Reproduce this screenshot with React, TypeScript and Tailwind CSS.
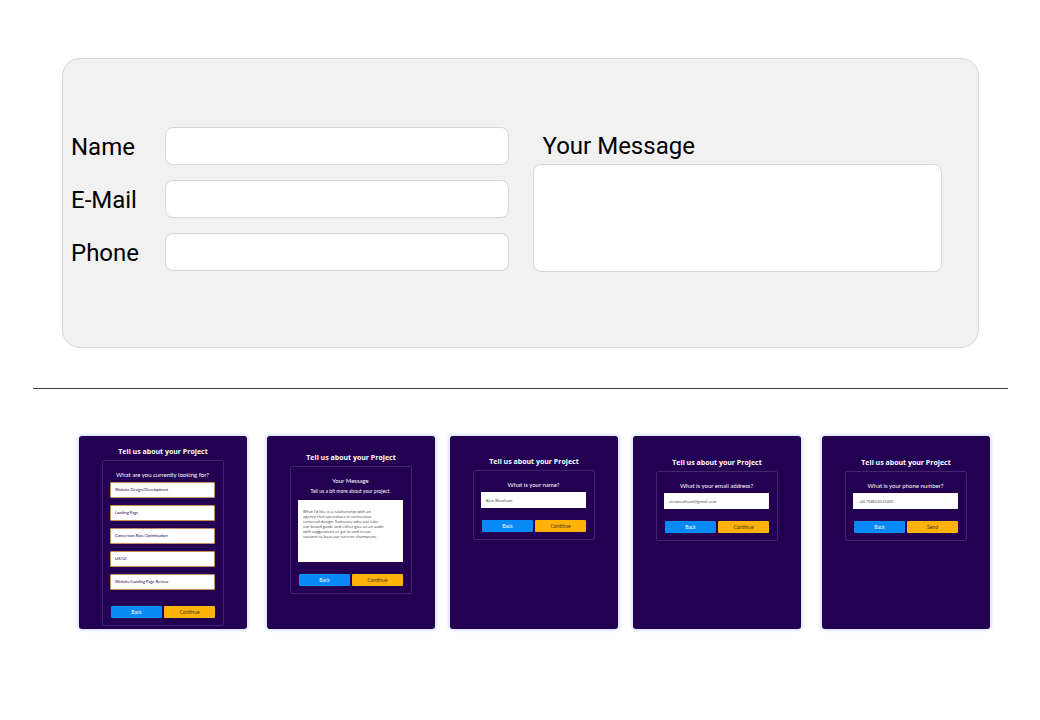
import { ReactNode } from "react";
import clsx from "clsx";

interface StepCardProps {
  children: ReactNode;
  className?: string;
  nextLabel?: string;
  actionsClassName?: string;
}

interface ContactFieldProps {
  id: string;
  label: string;
  type: string;
}

interface StepFieldProps extends ContactFieldProps {
  value: string;
}

const services = [
  "Website Design/Development",
  "Landing Page",
  "Conversion Rate Optimisation",
  "UX/UI",
  "Website/Landing Page Review",
];

const projectMessage = `What I'd like is a relationship with an
agency that specializes in conversion
centered design. Someone who can take
our brand guide and either give us an audit
with suggestions or get in and create
variants to beat our current champions.`;

function ContactField({ id, label, type }: ContactFieldProps) {
  return (
    <div className="flex items-center">
      <label htmlFor={id} className="w-[94px] shrink-0 pt-[2px]">
        {label}
      </label>
      <input
        id={id}
        type={type}
        className="h-[38px] min-w-0 flex-1 rounded-lg border border-[#d6d6d6] bg-white px-3 text-base"
      />
    </div>
  );
}

function StepCard({
  children,
  className,
  nextLabel = "Continue",
  actionsClassName = "mt-3",
}: StepCardProps) {
  return (
    <section
      className={clsx(
        "min-w-0 flex-1 rounded-[3px] bg-[#240052] px-[23px] text-white shadow-[0_0_3px_2px_#dde5fa]",
        className
      )}
    >
      <h2 className="text-center font-['Open_Sans',sans-serif] text-[7px] leading-[10px] font-bold whitespace-nowrap">
        Tell us about your Project
      </h2>
      <form className="mt-[3px] rounded-[2px] border border-[#43266c] pt-[9px] pr-2 pb-[7px] pl-[7px]">
        {children}
        <div
          className={clsx(
            "grid grid-cols-2 gap-[2px] pl-px text-[5px] leading-[12px]",
            actionsClassName
          )}
        >
          <button type="button" className="h-3 rounded-[1px] bg-[#078af5]">
            Back
          </button>
          <button
            type="button"
            className="h-3 rounded-[1px] bg-[#ffb20a] text-[#4a3512]"
          >
            {nextLabel}
          </button>
        </div>
      </form>
    </section>
  );
}

function StepField({ id, label, type, value }: StepFieldProps) {
  return (
    <div className="flex flex-col">
      <label
        htmlFor={id}
        className="text-center text-[6px] leading-[10px] whitespace-nowrap"
      >
        {label}
      </label>
      <input
        id={id}
        type={type}
        defaultValue={value}
        className="mt-[2px] h-4 w-full bg-white px-[5px] font-['Open_Sans',sans-serif] text-[4px] text-[#3a3a3a]"
      />
    </div>
  );
}

export default function App() {
  return (
    <main className="min-h-screen bg-white pt-[58px] pb-20 font-['Lato',sans-serif]">
      {/* Contact form */}
      <form className="mr-[61px] ml-[62px] grid grid-cols-[437fr_409fr] gap-6 rounded-[18px] border border-[#d6d6d6] bg-[#f1f1f1] pt-[68px] pr-9 pb-[75px] pl-2 font-['Roboto',sans-serif] text-2xl text-black">
        <div className="flex flex-col gap-[15px]">
          <ContactField id="name" label="Name" type="text" />
          <ContactField id="email" label="E-Mail" type="email" />
          <ContactField id="phone" label="Phone" type="tel" />
        </div>
        <div className="flex flex-col">
          <label htmlFor="message" className="h-[37px] px-[10px] pt-[3px]">
            Your Message
          </label>
          <textarea
            id="message"
            className="h-[108px] w-full resize-none rounded-lg border border-[#d6d6d6] bg-white p-3 text-base"
          />
        </div>
      </form>

      <hr className="mt-10 mr-8 ml-[33px] border-[#3c3c3c]" />

      {/* Project steps */}
      <div className="mt-[47px] mr-[50px] ml-[79px] flex min-h-[193px] gap-[15px]">
        <StepCard className="mr-[5px] pt-[11px]" actionsClassName="mt-4">
          <p className="text-center text-[6px] leading-[10px] whitespace-nowrap">
            What are you currently looking for?
          </p>
          <div className="mt-[2px] flex flex-col gap-[7px]">
            {services.map((service) => (
              <button
                type="button"
                key={service}
                className="h-4 rounded-[1px] border border-[#c98a5c] bg-white px-1 text-left text-[4px] whitespace-nowrap text-[#240052]"
              >
                {service}
              </button>
            ))}
          </div>
        </StepCard>
        <StepCard className="pt-[17px]">
          <div className="flex flex-col">
            <label
              htmlFor="step-message"
              className="text-center text-[6px] leading-[10px]"
            >
              Your Message
            </label>
            <p className="text-center text-[5px] leading-[10px] whitespace-nowrap">
              Tell us a bit more about your project.
            </p>
            <textarea
              id="step-message"
              defaultValue={projectMessage}
              className="mt-1 h-[62px] w-full resize-none overflow-hidden bg-white py-[9px] pl-[5px] font-['Open_Sans',sans-serif] text-[4px] leading-[5px] whitespace-pre text-[#3a3a3a]"
            />
          </div>
        </StepCard>
        <StepCard className="pt-[21px]">
          <StepField
            id="step-name"
            label="What is your name?"
            type="text"
            value="Alex Westham"
          />
        </StepCard>
        <StepCard className="pt-[22px]">
          <StepField
            id="step-email"
            label="What is your email address?"
            type="email"
            value="alexwestham@gmail.com"
          />
        </StepCard>
        <StepCard className="ml-[6px] pt-[22px]" nextLabel="Send">
          <StepField
            id="step-phone"
            label="What is your phone number?"
            type="tel"
            value="+44 758624522455"
          />
        </StepCard>
      </div>
    </main>
  );
}
